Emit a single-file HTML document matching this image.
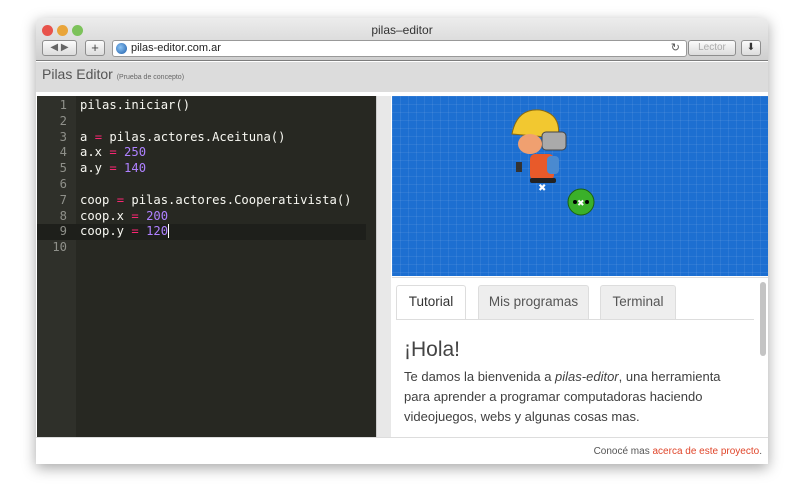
<!DOCTYPE html>
<html><head><style>
*{margin:0;padding:0;box-sizing:border-box}
body{width:805px;height:485px;background:#fff;position:relative;overflow:hidden;font-family:"Liberation Sans",sans-serif}
.win{position:absolute;left:36px;top:18px;width:732px;height:446px;background:#fff;box-shadow:0 4px 14px rgba(0,0,0,.35);border-radius:4px 4px 0 0;overflow:hidden}
.tb{position:absolute;left:0;top:0;width:732px;height:43px;background:linear-gradient(#ececec,#cfcfcf);border-bottom:1px solid #7d7d7d}
.dot{position:absolute;top:7px;width:11px;height:11px;border-radius:50%}
.title{position:absolute;top:5px;left:0;width:100%;text-align:center;font-size:12px;color:#333}
.btn{position:absolute;top:22px;height:16px;border:1px solid #8e8e8e;border-radius:3px;background:linear-gradient(#fbfbfb,#dcdcdc);font-size:10px;color:#666;text-align:center;line-height:14px}
.url{position:absolute;left:76px;top:22px;width:575px;height:17px;border:1px solid #999;border-radius:3px;background:#fff;font-size:11px;line-height:15px;padding-left:18px;color:#222}
.hdr{position:absolute;left:0;top:44px;width:732px;height:30px;background:#dcdcdc;font-size:14px;color:#555;padding:4px 0 0 6px}
.ed{position:absolute;left:1px;top:78px;width:339px;height:341px;background:#272822}
.gut{position:absolute;left:0;top:0;width:39px;height:341px;background:#2f302a}
.code{position:absolute;left:0;top:0;font-family:"DejaVu Sans Mono","Liberation Mono",monospace;font-size:12.2px;line-height:15.8px;color:#f8f8f2;padding-top:2px}
.ln{display:inline-block;width:30px;text-align:right;color:#8f908a;margin-right:13px}
.o{color:#f92672}.n{color:#ae81ff}
.sb{position:absolute;left:340px;top:78px;width:15px;height:341px;background:#e8e8e8;border-left:1px solid #ccc}
.cv{position:absolute;left:356px;top:78px;width:376px;height:180px;background-color:#1d6fd1;background-image:linear-gradient(rgba(255,255,255,.07) 1px,transparent 1px),linear-gradient(90deg,rgba(255,255,255,.07) 1px,transparent 1px);background-size:8px 8px}
.pan{position:absolute;left:356px;top:259px;width:376px;height:160px;background:#fff;border-top:1px solid #ddd;font-family:"Liberation Sans",sans-serif}
.tab{position:absolute;top:7px;height:34px;background:#eee;border:1px solid #ddd;border-bottom:none;border-radius:3px 3px 0 0;font-size:13.5px;color:#555;text-align:center;line-height:32px}
.foot{position:absolute;left:0;top:419px;width:732px;height:27px;background:#fff;border-top:1px solid #ddd;font-size:10px;color:#555;text-align:right;padding:8px 6px 0 0}
</style></head><body>
<div class="win">
<div class="tb">
<div class="dot" style="left:6px;background:#e8534b"></div>
<div class="dot" style="left:21px;background:#e9a53a"></div>
<div class="dot" style="left:36px;background:#7cc25a"></div>
<div class="title">pilas–editor</div>
<div class="btn" style="left:6px;width:35px">◀ ▶</div>
<div class="btn" style="left:49px;width:20px;font-size:13px;color:#444">+</div>
<div class="url"><span style="position:absolute;left:3px;top:2px;width:11px;height:11px;border-radius:50%;background:radial-gradient(circle at 40% 40%,#8cc4f5,#1d5ca8)"></span>pilas-editor.com.ar<span style="position:absolute;right:6px;top:0;color:#555">↻</span></div>
<div class="btn" style="left:652px;width:48px;color:#aaa">Lector</div>
<div class="btn" style="left:705px;width:20px;color:#333">⬇</div>
</div>
<div class="hdr">Pilas Editor <span style="font-size:7px;color:#666">(Prueba de concepto)</span></div>
<div class="ed"><div class="gut"></div>
<div class="code">
<div><span class="ln">1</span>pilas.iniciar()</div>
<div><span class="ln">2</span></div>
<div><span class="ln">3</span>a <span class="o">=</span> pilas.actores.Aceituna()</div>
<div><span class="ln">4</span>a.x <span class="o">=</span> <span class="n">250</span></div>
<div><span class="ln">5</span>a.y <span class="o">=</span> <span class="n">140</span></div>
<div><span class="ln">6</span></div>
<div><span class="ln">7</span>coop <span class="o">=</span> pilas.actores.Cooperativista()</div>
<div><span class="ln">8</span>coop.x <span class="o">=</span> <span class="n">200</span></div>
<div style="background:#1e1f1b;width:329px"><span class="ln">9</span>coop.y <span class="o">=</span> <span class="n">120</span><span style="border-left:1px solid #fff"></span></div>
<div><span class="ln">10</span></div>
</div></div>
<div class="sb"></div>
<div class="cv">
<svg width="376" height="180" style="position:absolute;left:0;top:0">
<path d="M120 38 Q125 12 148 14 Q170 18 166 42 Z" fill="#f2c830" stroke="#8a6a10"/>
<rect x="150" y="36" width="24" height="18" rx="4" fill="#aaa" stroke="#444"/>
<ellipse cx="138" cy="48" rx="12" ry="10" fill="#f0a070"/>
<rect x="138" y="58" width="24" height="26" rx="5" fill="#e85a2a"/>
<rect x="155" y="60" width="12" height="18" rx="4" fill="#4a8ad0"/>
<rect x="124" y="66" width="6" height="10" fill="#333"/>
<rect x="138" y="82" width="26" height="5" rx="2" fill="#222"/>
<text x="146" y="95" fill="#fff" font-size="10" font-family="Liberation Sans">✖</text>
<circle cx="189" cy="106" r="13" fill="#3ab02a" stroke="#1a6010"/>
<circle cx="183" cy="106" r="2" fill="#000"/><circle cx="195" cy="106" r="2" fill="#000"/>
<text x="185" y="110" fill="#fff" font-size="9" font-family="Liberation Sans">✖</text>
</svg></div>
<div class="pan">
<div class="tab" style="left:4px;width:70px;background:#fff;color:#333">Tutorial</div>
<div class="tab" style="left:86px;width:111px">Mis programas</div>
<div class="tab" style="left:208px;width:76px">Terminal</div>
<div style="position:absolute;left:4px;right:14px;top:41px;border-top:1px solid #ddd"></div>
<div style="position:absolute;right:2px;top:4px;width:6px;height:74px;background:#c4c4c4;border-radius:3px"></div>
<div style="position:absolute;left:12px;top:60px;font-size:21px;color:#444;font-weight:300">¡Hola!</div>
<div style="position:absolute;left:12px;top:89px;width:340px;font-size:13px;line-height:20px;color:#404040">Te damos la bienvenida a <i>pilas-editor</i>, una herramienta para aprender a programar computadoras haciendo videojuegos, webs y algunas cosas mas.</div>
</div>
<div class="foot">Conocé mas <span style="color:#e0452a">acerca de este proyecto</span>.</div>
</div>
</body></html>
